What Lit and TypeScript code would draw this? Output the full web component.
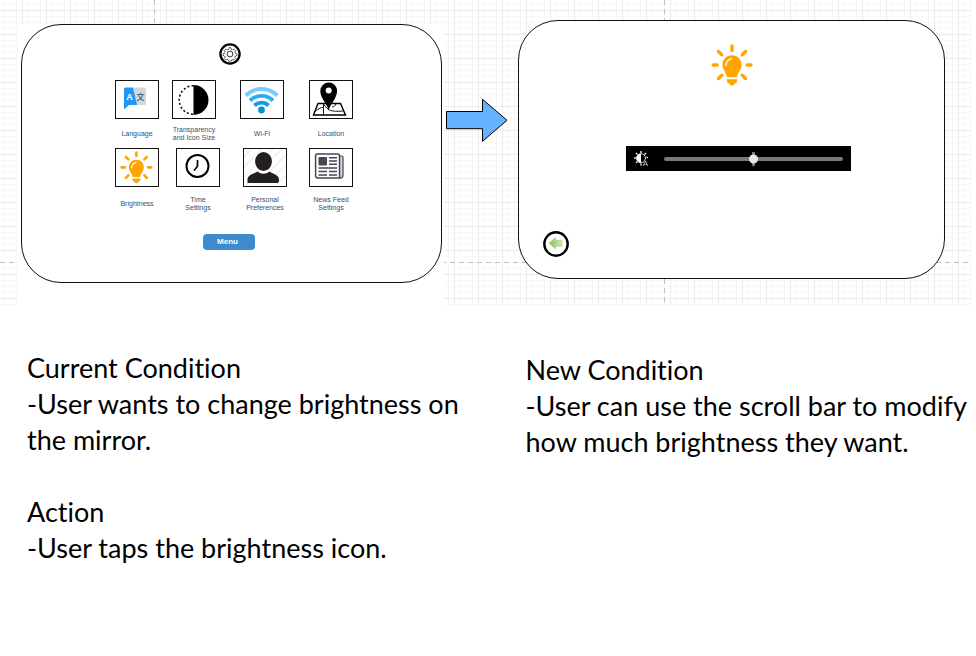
import { LitElement, html, svg, css, type TemplateResult } from "lit";
import { customElement, property, state } from "lit/decorators.js";

const bulb = svg`
  <g stroke="#ffa500" stroke-width="3.4" stroke-linecap="round" fill="none">
    <path d="M21 2v4.5M2.2 21h4M36 21h4M7.5 7.5l3.2 3.2M34.5 7.500l-3.2 3.2M7.5 34.5l3.2-3.2M34.5 34.5l-3.2-3.2"/>
  </g>
  <path d="M21 11.3c-5.6 0-9.6 4.2-9.6 9.4 0 5 3.6 7 4.8 12.6h9.6c1.2-5.6 4.8-7.6 4.8-12.6 0-5.2-4-9.4-9.6-9.4z" fill="#ffa500"/>
  <path d="M15 21.5c.2-3.4 2-5.8 5.2-6.6" stroke="#fff" stroke-width="1.4" stroke-linecap="round" fill="none"/>
  <path d="M16 35.2h10v2.4c0 1.2-1 1.8-2.2 1.9-.8 1.5-1.7 2-2.8 2s-2-.5-2.8-2c-1.2-.1-2.2-.7-2.2-1.9z" fill="#ffa500"/>`;

const icons: Record<string, TemplateResult> = {
  language: svg`
    <path d="M18 7.5h11.5a1.5 1.5 0 0 1 1.5 1.5v14.5a1.5 1.5 0 0 1-1.5 1.5H21z" fill="#cfd8dc"/>
    <path d="M9 9a1.5 1.5 0 0 1 1.5-1.5H18L22 25h-8l-5 4.5z" fill="#2196f3"/>
    <text x="14.5" y="20" text-anchor="middle" font-family="Liberation Sans, sans-serif" font-size="9" font-weight="700" fill="#fff">A</text>
    <text x="25.5" y="19.5" text-anchor="middle" font-family="Noto Sans CJK SC, sans-serif" font-size="8" font-weight="700" fill="#546e7a">文</text>`,
  transparency: svg`
    <path d="M21.5 5a15 15 0 0 1 0 30z" fill="#000"/>
    <path d="M21.5 5.7a14.3 14.3 0 0 0 0 28.6" fill="none" stroke="#000" stroke-width="1.5" stroke-dasharray="2 2.2"/>`,
  wifi: svg`
    <circle cx="21.5" cy="30" r="3.4" fill="#0e90d8"/>
    <g fill="none" stroke-width="3.9">
      <path d="M14.5 25.5a10 10 0 0 1 14 0" stroke="#149ae2"/>
      <path d="M10 20.5a16.5 16.5 0 0 1 23 0" stroke="#2badf2"/>
      <path d="M5.7 15.5a22.5 22.5 0 0 1 31.6 0" stroke="#74cdfa"/>
    </g>`,
  location: svg`
    <g fill="none" stroke="#000">
      <path d="M9 23.5h22.5l5 11.5h-32z" stroke-width="1.4"/>
      <path d="M14.5 23.5V35M5.5 32c3-2.5 6-4.5 9-5M15 24.5c4 6 7 7.5 19 6.5M23 27c2 0 3.5-1.5 4-3.5" stroke-width=".9"/>
    </g>
    <path d="M19.7 30.5c-1-6-8.4-12-8.4-19.5a8.4 8.4 0 0 1 16.8 0c0 7.5-7.4 13.5-8.4 19.5z" fill="#000"/>
    <circle cx="19.7" cy="10.5" r="3" fill="#fff"/>`,
  brightness: svg`<g transform="translate(5 3) scale(.78)">${bulb}</g>`,
  time: svg`
    <circle cx="21.5" cy="18" r="11" fill="none" stroke="#000" stroke-width="2"/>
    <path d="M21.5 12.5v5.7l-3 3.8" fill="none" stroke="#000" stroke-width="1.7" stroke-linecap="round"/>`,
  personal: svg`
    <path d="M0 10L10 0M0 20L20 0M0 30L30 0M3 37L40 0M13 37l29-29M23 37l19-19M33 37l9-9" stroke="#eee" stroke-width="1.5"/>
    <path d="M4.5 35v-3.5c0-4.5 6-5.5 10-8 2 1.5 3.8 2.2 6 2.2s4-.7 6-2.2c4 2.5 9.5 3.5 9.5 8V33a2 2 0 0 1-2 2z" fill="#231f20"/>
    <ellipse cx="20.5" cy="13.5" rx="9.2" ry="10.3" fill="#231f20" stroke="#fff" stroke-width="1.5"/>`,
  news: svg`
    <path d="M30.5 8h2.300q1.200 0 1.200 1.200V27.500a2.500 2.500 0 0 1-3 2.500" fill="#d5d5de" stroke="#454553" stroke-width="1.2"/>
    <path d="M8.2 6h20.6q1.700 0 1.700 1.700V30H9a2.300 2.300 0 0 1-2.400-2.300V7.700Q6.600 6 8.200 6z" fill="#fff" stroke="#454553" stroke-width="1.5"/>
    <rect x="9.5" y="9" width="8.5" height="8.500" rx="1" fill="#454553"/>
    <path d="M20 9.7h8M20 13h8M20 16.300h8M9.500 20h18.500M9.500 23.500h8.500M20 23.500h8M9.500 27h8.500M20 27h8" stroke="#454553" stroke-width="1.6"/>`,
};

interface Setting {
  icon: string;
  label: string;
}

const firstRow: Setting[] = [
  { icon: "language", label: "Language" },
  { icon: "transparency", label: "Transparency\nand Icon Size" },
  { icon: "wifi", label: "Wi-Fi" },
  { icon: "location", label: "Location" },
];

const secondRow: Setting[] = [
  { icon: "brightness", label: "Brightness" },
  { icon: "time", label: "Time\nSettings" },
  { icon: "personal", label: "Personal\nPreferences" },
  { icon: "news", label: "News Feed\nSettings" },
];

@customElement("setting-tile")
export class SettingTile extends LitElement {
  @property() icon = "";
  @property() label = "";

  static styles = css`
    :host {
      display: block;
      width: 56px;
    }
    .tile {
      display: flex;
      flex-direction: column;
      align-items: center;
      width: 100%;
      height: 100%;
      padding: 0;
      border: 0;
      background: none;
      cursor: pointer;
      font: 7px/8px "Liberation Sans", Arial, sans-serif;
      color: #34506e;
    }
    .frame {
      box-sizing: border-box;
      width: 44px;
      height: 39px;
      border: 1px solid #111;
      background: #fff;
    }
    .frame svg {
      display: block;
    }
    .label {
      display: flex;
      flex: 1;
      align-items: center;
      text-align: center;
      white-space: pre;
    }
  `;

  render() {
    return html`
      <button class="tile" type="button">
        <span class="frame">
          <svg width="42" height="37" viewBox="1 1 42 37" aria-hidden="true">${icons[this.icon]}</svg>
        </span>
        <span class="label">${this.label}</span>
      </button>
    `;
  }
}

@customElement("app-root")
export class AppRoot extends LitElement {
  @state() private level = 50;

  static styles = css`
    :host {
      display: block;
      min-height: 100vh;
      background: #fff;
      color: #000;
      font-family: "Liberation Sans", Arial, sans-serif;
    }
    .board {
      display: grid;
      grid-template-columns: minmax(0, 1fr) 74px minmax(0, 1fr);
      align-items: start;
      margin-right: 5px;
      padding: 0 26px 0 17px;
      background-color: #fff;
      background-image:
        repeating-linear-gradient(90deg, #c0c0c0 0 5px, transparent 5px 9px),
        repeating-linear-gradient(#c0c0c0 0 5px, transparent 5px 9px),
        repeating-linear-gradient(#c0c0c0 0 5px, transparent 5px 9px),
        linear-gradient(90deg, #ebebeb 1px, transparent 1px),
        linear-gradient(#ebebeb 1px, transparent 1px),
        linear-gradient(90deg, #f8f8f8 1px, transparent 1px),
        linear-gradient(#f8f8f8 1px, transparent 1px);
      background-size: 100% 1px, 1px 100%, 1px 100%, 24px 24px, 24px 24px, 6px 6px, 6px 6px;
      background-position: 0 262px, 154px 0, 664px 0, 22px 10px, 22px 10px, 4px 4px, 4px 4px;
      background-repeat: no-repeat, no-repeat, no-repeat, repeat, repeat, repeat, repeat;
    }
    .sheet {
      margin-top: 24px;
      padding: 0 2px 22px 4px;
      background: #fff;
    }
    .screen {
      box-sizing: border-box;
      display: flex;
      flex-direction: column;
      align-items: center;
      min-height: 259px;
      border: 1px solid #111;
      border-radius: 40px;
      background: #fff;
    }
    .home {
      padding: 18px 0 32px;
    }
    .gear {
      display: block;
      margin-right: 3px;
    }
    .row {
      display: grid;
      margin-left: 5px;
    }
    .first {
      grid-template-columns: 57px 68px 69px 56px;
      grid-auto-rows: 68px;
      margin-top: 15px;
    }
    .second {
      grid-template-columns: 61px 67px 66px 56px;
      grid-auto-rows: 72px;
    }
    .menu {
      width: 52px;
      height: 16px;
      margin: 14px 6px 0 0;
      padding: 0 2px 0 0;
      border: 0;
      border-radius: 4px;
      background: #3d8bcd;
      color: #fff;
      font: bold 8px/16px "Liberation Sans", Arial, sans-serif;
      cursor: pointer;
    }
    .arrow {
      margin: 98px 0 0 2px;
    }
    .detail {
      margin-top: 20px;
      padding: 23px 24px 20px;
    }
    .slider {
      box-sizing: border-box;
      display: flex;
      align-items: center;
      gap: 15px;
      width: 225px;
      height: 25px;
      margin: 60px 0 0 14px;
      padding: 0 8px;
      background: #000;
    }
    .auto {
      flex: none;
    }
    .range {
      flex: 1;
      min-width: 0;
      height: 16px;
      margin: 0;
      appearance: none;
      background: none;
    }
    .range::-webkit-slider-runnable-track {
      height: 4px;
      border-radius: 2px;
      background: #787878;
    }
    .range::-webkit-slider-thumb {
      appearance: none;
      width: 9px;
      height: 14px;
      margin-top: -5px;
      background:
        radial-gradient(circle at center, #e6e6e6 4px, transparent 5px),
        linear-gradient(90deg, transparent 3px, #777 3px 6px, transparent 6px);
    }
    .back {
      align-self: flex-start;
      width: 26px;
      height: 26px;
      margin-top: 60px;
      padding: 0;
      border: 0;
      background: none;
      cursor: pointer;
    }
    .back svg,
    .arrow,
    .auto,
    .bulb {
      display: block;
    }
    .notes {
      display: grid;
      grid-template-columns: 1fr 1fr;
      gap: 48px;
      padding: 45px 0 36px 27px;
      font: 27px/36px Lato, Carlito, Calibri, sans-serif;
      font-variant-ligatures: none;
    }
    .notes h2,
    .notes p {
      margin: 0;
      font-size: 27px;
      font-weight: 400;
    }
    .notes p + h2 {
      margin-top: 36px;
    }
    .next {
      padding-top: 2px;
    }
  `;

  private onLevel(e: Event) {
    this.level = Number((e.target as HTMLInputElement).value);
  }

  private tiles(list: Setting[]) {
    return list.map((s) => html`<setting-tile .icon=${s.icon} .label=${s.label}></setting-tile>`);
  }

  render() {
    return html`
      <main>
        <div class="board">
          <div class="sheet">
            <section class="screen home" aria-label="Settings">
              <svg class="gear" width="22" height="22" viewBox="0 0 22 22" aria-hidden="true">
                <circle cx="11" cy="11" r="9.6" fill="#fff" stroke="#000" stroke-width="2.3"/>
                <circle cx="11" cy="11" r="2.9" fill="none" stroke="#222" stroke-width=".9"/>
                <path d="M9.9 4.8h2.2l.4 1.6 1.3.5 1.4-.8 1.5 1.5-.8 1.4.5 1.3 1.6.4v1.8l-1.6.4-.5 1.3.8 1.4-1.5 1.5-1.4-.8-1.3.5-.4 1.4H9.900l-.4-1.4-1.3-.5-1.4.8-1.5-1.5.8-1.4-.5-1.3-1.6-.4v-1.8l1.6-.4.5-1.3-.8-1.4 1.5-1.5 1.4.8 1.3-.5z" fill="none" stroke="#222" stroke-width=".9" stroke-dasharray="2 .8"/>
              </svg>
              <div class="row first">${this.tiles(firstRow)}</div>
              <div class="row second">${this.tiles(secondRow)}</div>
              <button class="menu" type="button">Menu</button>
            </section>
          </div>
          <svg class="arrow" width="62" height="44" viewBox="0 0 62 44" aria-hidden="true">
            <path d="M.5 13.5h36V1.3L61 22.3 36.5 43.3V30.700H.5z" fill="#66b2ff" stroke="#000"/>
          </svg>
          <section class="screen detail" aria-label="Brightness">
            <svg class="bulb" width="42" height="42" viewBox="0 0 42 42" aria-hidden="true">${bulb}</svg>
            <div class="slider">
              <svg class="auto" width="15" height="15" viewBox="0 0 15 15" aria-hidden="true">
                <path d="M7 0v2M2 2l1.5 1.5M0 7h2M2 12l1.5-1.5M7 12.5v2M12 2l-1.5 1.5M12.5 6.500h1.5" stroke="#dfe8f5" stroke-width="1.5"/>
                <circle cx="7" cy="7.2" r="4.5" fill="#000" stroke="#c9d6ea"/>
                <path d="M7 2.7a4.5 4.5 0 0 0 0 9z" fill="#fff"/>
                <text x="11.5" y="14.5" text-anchor="middle" font-family="Liberation Sans, sans-serif" font-size="8" fill="#b9c9e2">A</text>
              </svg>
              <input class="range" type="range" min="0" max="100" aria-label="Brightness"
                .value=${String(this.level)} @input=${this.onLevel} />
            </div>
            <button class="back" type="button" aria-label="Back">
              <svg width="26" height="26" viewBox="0 0 26 26" aria-hidden="true">
                <defs>
                  <linearGradient id="leaf" x1="0" y1="0" x2="1" y2="0">
                    <stop offset="0" stop-color="#86bf4e"/>
                    <stop offset="1" stop-color="#d3e9c0"/>
                  </linearGradient>
                </defs>
                <circle cx="13" cy="13" r="11.7" fill="#fff" stroke="#000" stroke-width="2.4"/>
                <path d="M6 12.2l6.5-5.7v2.8h6.5v6h-6.5v2.7z" fill="url(#leaf)" stroke="#a9cf87" stroke-width=".7"/>
              </svg>
            </button>
          </section>
        </div>
        <div class="notes">
          <section>
            <h2>Current Condition</h2>
            <p>-User wants to change brightness on the mirror.</p>
            <h2>Action</h2>
            <p>-User taps the brightness icon.</p>
          </section>
          <section class="next">
            <h2>New Condition</h2>
            <p>-User can use the scroll bar to modify how much brightness they want.</p>
          </section>
        </div>
      </main>
    `;
  }
}
